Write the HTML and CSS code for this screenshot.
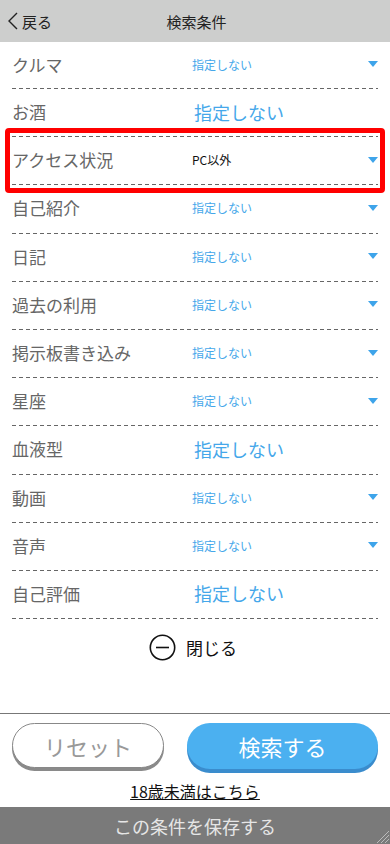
FILE: index.html
```html
<!DOCTYPE html>
<html lang="ja">
<head>
    <meta charset="utf-8">
    <title>検索条件</title>
    <link rel="stylesheet" href="styles.css">
</head>
<body>

<div class="page">
    <header class="topbar">
        <a class="back" href="#">
            <svg width="12" height="18" viewBox="0 0 12 18"><polyline points="10,1 2,9 10,17" fill="none" stroke="#222" stroke-width="1.4"/></svg>
            <span>戻る</span>
        </a>
        <h1 class="title">検索条件</h1>
    </header>

    <ul class="conditions">
        <li class="row"><span class="label">クルマ</span><span class="value small">指定しない</span><span class="arrow"></span></li>
        <li class="row"><span class="label">お酒</span><span class="value big">指定しない</span></li>
        <li class="row selected"><span class="label">アクセス状況</span><span class="value small set">PC以外</span><span class="arrow"></span></li>
        <li class="row"><span class="label">自己紹介</span><span class="value small">指定しない</span><span class="arrow"></span></li>
        <li class="row"><span class="label">日記</span><span class="value small">指定しない</span><span class="arrow"></span></li>
        <li class="row"><span class="label">過去の利用</span><span class="value small">指定しない</span><span class="arrow"></span></li>
        <li class="row"><span class="label">掲示板書き込み</span><span class="value small">指定しない</span><span class="arrow"></span></li>
        <li class="row"><span class="label">星座</span><span class="value small">指定しない</span><span class="arrow"></span></li>
        <li class="row"><span class="label">血液型</span><span class="value big">指定しない</span></li>
        <li class="row"><span class="label">動画</span><span class="value small">指定しない</span><span class="arrow"></span></li>
        <li class="row"><span class="label">音声</span><span class="value small">指定しない</span><span class="arrow"></span></li>
        <li class="row"><span class="label">自己評価</span><span class="value big">指定しない</span></li>
    </ul>

    <div class="close">
        <svg width="27" height="27" viewBox="0 0 27 27"><circle cx="13.5" cy="13.5" r="12.2" fill="none" stroke="#111" stroke-width="1.6"/><line x1="7" y1="13.5" x2="20" y2="13.5" stroke="#111" stroke-width="1.6"/></svg>
        <span>閉じる</span>
    </div>

    <footer class="footer">
        <div class="buttons">
            <button class="btn reset">リセット</button>
            <button class="btn search">検索する</button>
        </div>
        <a class="under18" href="#">18歳未満はこちら</a>
        <div class="savebar">
            この条件を保存する
            <svg class="grip" width="14" height="14" viewBox="0 0 14 14"><path d="M14 2 L2 14 M14 6 L6 14 M14 10 L10 14" stroke="#bbb" stroke-width="1"/></svg>
        </div>
    </footer>
</div>

</body>
</html>
```

FILE: styles.css
```css
* {
    box-sizing: border-box;
}

body {
    margin: 0;
    font-family: "Noto Sans CJK JP", "Noto Sans", sans-serif;
    background: #fff;
    color: #222;
}

.page {
    width: 390px;
    height: 844px;
    display: flex;
    flex-direction: column;
    overflow: hidden;
}

.topbar {
    height: 42px;
    background: #cdcecd;
    display: flex;
    align-items: center;
    position: relative;
}

.back {
    display: flex;
    align-items: center;
    gap: 3px;
    padding-left: 7px;
    color: #222;
    text-decoration: none;
    font-size: 15px;
    z-index: 1;
}

.title {
    position: absolute;
    left: 0;
    right: 0;
    margin: 0;
    text-align: center;
    font-size: 15px;
    font-weight: normal;
    padding-left: 3px;
}

.conditions {
    list-style: none;
    margin: 0 12px;
    padding: 0;
}

.row {
    height: 48.2px;
    padding-bottom: 3px;
    display: flex;
    align-items: center;
    position: relative;
    background: repeating-linear-gradient(to right, #666 0 4px, transparent 4px 7px) bottom left / 100% 1px no-repeat;
}

.row:first-child {
    height: 47px;
}

.row.selected::after {
    content: "";
    position: absolute;
    top: -9px;
    bottom: -8px;
    left: -7px;
    right: -7px;
    border: 5px solid #ff0000;
    border-radius: 4px;
}

.label {
    width: 180px;
    font-size: 17px;
    color: #666;
}

.value {
    flex: 1;
    color: #45a7ea;
}

.value.small {
    font-size: 12px;
}

.value.big {
    font-size: 18px;
    padding-left: 2px;
}

.value.set {
    color: #111;
}

.arrow {
    width: 0;
    height: 0;
    border-left: 5px solid transparent;
    border-right: 5px solid transparent;
    border-top: 6px solid #3ea4ea;
}

.close {
    height: 56px;
    display: flex;
    align-items: center;
    justify-content: center;
    gap: 10px;
    font-size: 17px;
    color: #111;
    padding-right: 4px;
}

.footer {
    margin-top: auto;
    border-top: 1px solid #777;
    display: flex;
    flex-direction: column;
    align-items: center;
}

.buttons {
    width: 100%;
    display: flex;
    justify-content: space-between;
    padding: 9px 12px 0;
}

.btn {
    font-family: inherit;
    font-size: 22px;
    border-radius: 25px;
    cursor: pointer;
}

.reset {
    width: 152px;
    height: 45px;
    background: #fff;
    color: #999;
    border: 1px solid #888;
    box-shadow: 0 3px 0 #8a8a8a;
}

.search {
    width: 191px;
    height: 46px;
    background: #4bb0f0;
    color: #fff;
    border: none;
    box-shadow: 0 4px 0 #3a8ccd;
}

.under18 {
    margin-top: 12px;
    font-size: 16px;
    color: #111;
    line-height: 20px;
}

.savebar {
    margin-top: 6px;
    width: 100%;
    height: 37px;
    background: #7a7a7a;
    color: #e6e6e6;
    font-size: 18px;
    display: flex;
    align-items: center;
    justify-content: center;
    position: relative;
}

.grip {
    position: absolute;
    right: 1px;
    bottom: 1px;
}
```
